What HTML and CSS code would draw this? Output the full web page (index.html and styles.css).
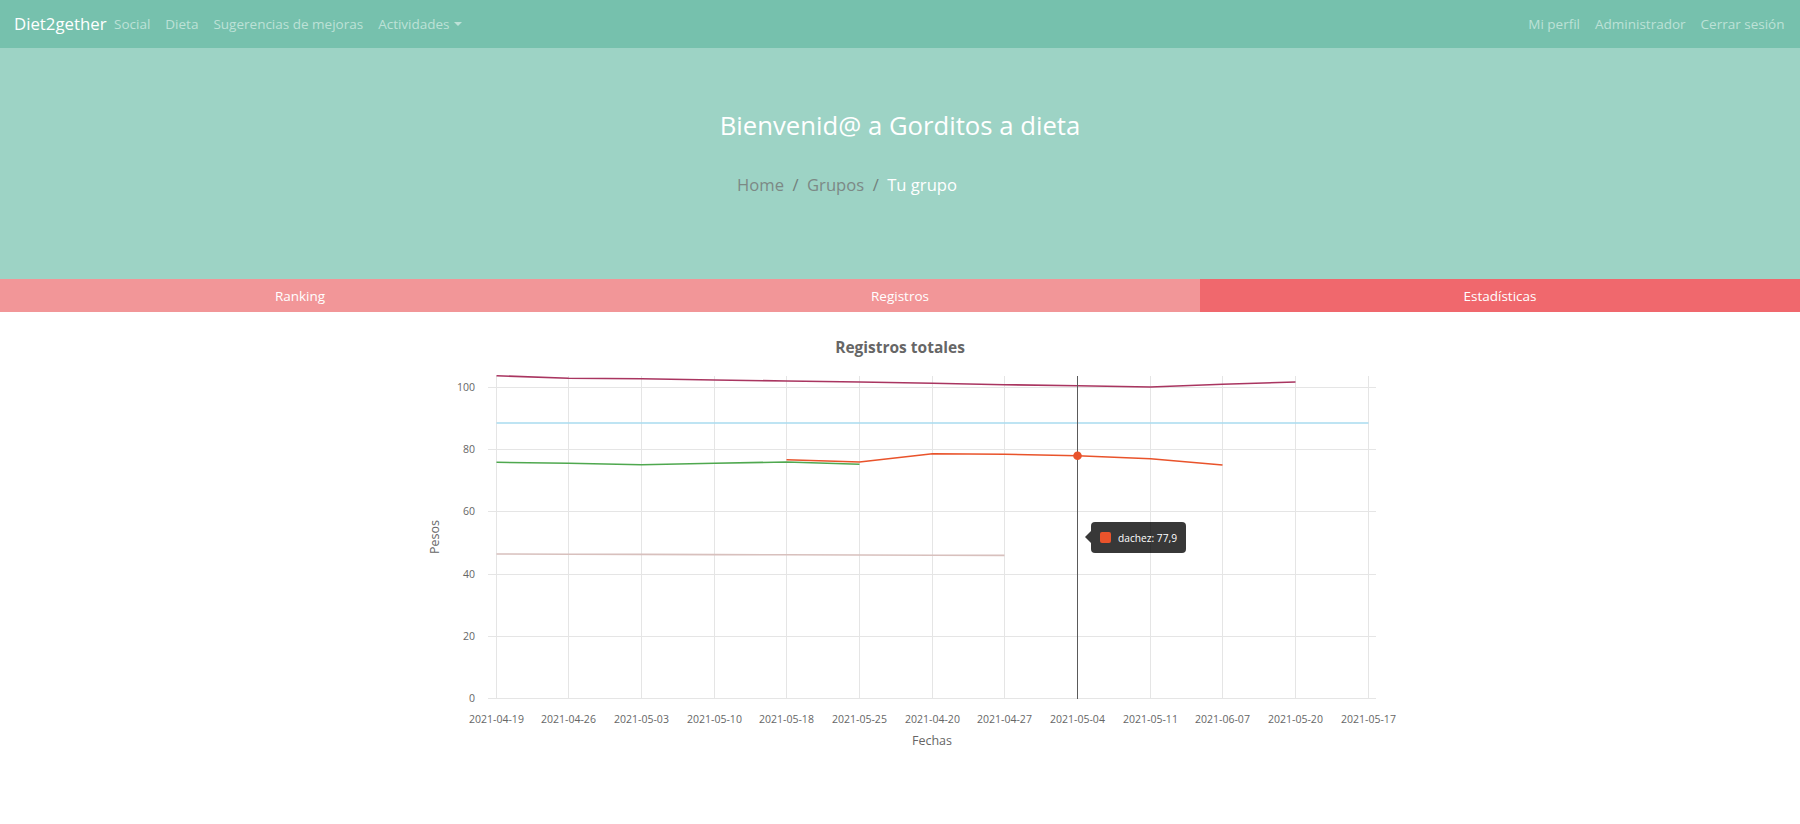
FILE: index.html
```html
<!DOCTYPE html>
<html lang="es">
<head>
<meta charset="utf-8">
<title>Diet2gether - Tu grupo</title>
<link rel="stylesheet" href="styles.css">
</head>
<body>
<nav class="navbar">
  <a class="brand" href="#">Diet2gether</a>
  <ul class="nav-list">
    <li><a class="nav-link" href="#">Social</a></li>
    <li><a class="nav-link" href="#">Dieta</a></li>
    <li><a class="nav-link" href="#">Sugerencias de mejoras</a></li>
    <li><a class="nav-link dropdown" href="#">Actividades</a></li>
  </ul>
  <ul class="nav-list nav-right">
    <li><a class="nav-link" href="#">Mi perfil</a></li>
    <li><a class="nav-link" href="#">Administrador</a></li>
    <li><a class="nav-link" href="#">Cerrar sesión</a></li>
  </ul>
</nav>

<header class="hero">
  <h1 class="hero-title">Bienvenid@ a Gorditos a dieta</h1>
  <ol class="breadcrumb">
    <li><a href="#">Home</a></li>
    <li class="sep">/</li>
    <li><a href="#">Grupos</a></li>
    <li class="sep">/</li>
    <li class="active">Tu grupo</li>
  </ol>
</header>

<div class="tabs">
  <button class="tab">Ranking</button>
  <button class="tab">Registros</button>
  <button class="tab active">Estadísticas</button>
</div>

<main class="content">
  <section class="chart-card">
    <h2 class="chart-title">Registros totales</h2>
    <div class="chart">
      <svg class="chart-svg" width="960" height="400" viewBox="0 0 960 400">
        <g class="grid">
          <line x1="68" y1="338.5" x2="956" y2="338.5"/>
          <line x1="68" y1="276.5" x2="956" y2="276.5"/>
          <line x1="68" y1="214.5" x2="956" y2="214.5"/>
          <line x1="68" y1="151.5" x2="956" y2="151.5"/>
          <line x1="68" y1="89.5" x2="956" y2="89.5"/>
          <line x1="68" y1="27.5" x2="956" y2="27.5"/>
          <line x1="76.5" y1="16" x2="76.5" y2="339"/>
          <line x1="148.5" y1="16" x2="148.5" y2="339"/>
          <line x1="221.5" y1="16" x2="221.5" y2="339"/>
          <line x1="294.5" y1="16" x2="294.5" y2="339"/>
          <line x1="366.5" y1="16" x2="366.5" y2="339"/>
          <line x1="439.5" y1="16" x2="439.5" y2="339"/>
          <line x1="512.5" y1="16" x2="512.5" y2="339"/>
          <line x1="584.5" y1="16" x2="584.5" y2="339"/>
          <line x1="657.5" y1="16" x2="657.5" y2="339"/>
          <line x1="730.5" y1="16" x2="730.5" y2="339"/>
          <line x1="802.5" y1="16" x2="802.5" y2="339"/>
          <line x1="875.5" y1="16" x2="875.5" y2="339"/>
          <line x1="948.5" y1="16" x2="948.5" y2="339"/>
        </g>
        <g class="ticks-y" text-anchor="end">
          <text x="55" y="342">0</text>
          <text x="55" y="280">20</text>
          <text x="55" y="218">40</text>
          <text x="55" y="155">60</text>
          <text x="55" y="93">80</text>
          <text x="55" y="31">100</text>
        </g>
        <g class="ticks-x" text-anchor="middle">
          <text x="76.5" y="363">2021-04-19</text>
          <text x="148.5" y="363">2021-04-26</text>
          <text x="221.5" y="363">2021-05-03</text>
          <text x="294.5" y="363">2021-05-10</text>
          <text x="366.5" y="363">2021-05-18</text>
          <text x="439.5" y="363">2021-05-25</text>
          <text x="512.5" y="363">2021-04-20</text>
          <text x="584.5" y="363">2021-04-27</text>
          <text x="657.5" y="363">2021-05-04</text>
          <text x="730.5" y="363">2021-05-11</text>
          <text x="802.5" y="363">2021-06-07</text>
          <text x="875.5" y="363">2021-05-20</text>
          <text x="948.5" y="363">2021-05-17</text>
        </g>
        <text class="axis-label" x="512" y="385" text-anchor="middle">Fechas</text>
        <text class="axis-label" transform="translate(19 177) rotate(-90)" text-anchor="middle">Pesos</text>
        <g class="series" fill="none">
          <polyline stroke="#d8c0bd" points="76.5,194 148.5,194.2 221.5,194.4 294.5,194.6 366.5,194.8 439.5,195 512.5,195.2 584.5,195.4"/>
          <polyline stroke="#a9dbef" points="76.5,63 948.5,63"/>
          <polyline stroke="#4fa84f" points="76.5,102.3 148.5,103.3 221.5,104.7 294.5,103.3 366.5,102 439.5,104.3"/>
          <polyline stroke="#e9532b" points="366.5,99.7 439.5,102 512.5,93.7 584.5,94.3 657.5,95.7 730.5,98.7 802.5,105"/>
          <polyline stroke="#a93560" points="76.5,15.7 148.5,18.3 221.5,18.7 294.5,20 366.5,21 439.5,22 512.5,23.3 584.5,24.7 657.5,25.7 730.5,27 802.5,24.3 875.5,22"/>
        </g>
        <line class="hover-line" x1="657.5" y1="16" x2="657.5" y2="339"/>
        <circle cx="657.5" cy="95.7" r="4.3" fill="#e9532b"/>
      </svg>
      <div class="tooltip">
        <span class="tooltip-swatch"></span>
        <span class="tooltip-text">dachez: 77,9</span>
      </div>
    </div>
  </section>
</main>
</body>
</html>
```

FILE: styles.css
```css
* { box-sizing: border-box; }
html, body { margin: 0; padding: 0; }
body {
  font-family: "Open Sans", "Noto Sans", sans-serif;
  background: #fff;
  color: #212529;
  overflow: hidden;
}
a { text-decoration: none; }

.navbar {
  display: flex;
  align-items: center;
  height: 48px;
  padding: 0 8px 0 14px;
  background: #76c1ad;
}
.brand {
  color: #fff;
  font-size: 16.8px;
  line-height: 1;
}
.nav-list {
  display: flex;
  list-style: none;
  margin: 0;
  padding: 0;
}
.nav-right { margin-left: auto; }
.nav-link {
  display: block;
  padding: 0 7.5px;
  font-size: 13.5px;
  color: #bde1d7;
}
.dropdown::after {
  content: "";
  display: inline-block;
  margin-left: 4px;
  vertical-align: 3px;
  border-top: 4px solid #bde1d7;
  border-left: 4px solid transparent;
  border-right: 4px solid transparent;
}

.hero {
  height: 231px;
  background: #9dd3c5;
  display: flex;
  flex-direction: column;
  align-items: center;
  padding-top: 62px;
}
.hero-title {
  margin: 0;
  font-size: 25.7px;
  font-weight: 400;
  line-height: 32px;
  color: #fff;
}
.breadcrumb {
  display: flex;
  list-style: none;
  margin: 31px 106px 0 0;
  padding: 0;
  font-size: 16.6px;
  line-height: 24px;
  gap: 8.5px;
}
.breadcrumb a { color: #7c8985; }
.breadcrumb .sep { color: #72807c; }
.breadcrumb .active { color: #fff; }

.tabs {
  display: grid;
  grid-template-columns: repeat(3, 1fr);
  height: 33px;
}
.tab {
  border: 0;
  margin: 0;
  padding: 0;
  background: #f29698;
  color: #fff;
  font-family: inherit;
  font-size: 13.5px;
}
.tab.active { background: #f0686d; }

.content { padding-top: 25px; }
.chart-title {
  margin: 0;
  text-align: center;
  font-size: 15.5px;
  line-height: 20px;
  font-weight: 700;
  color: #666;
}
.chart {
  position: relative;
  width: 960px;
  margin: 3px auto 0;
}
.chart-svg { display: block; overflow: visible; }
.grid line { stroke: #e5e5e5; stroke-width: 1; }
.ticks-y text, .ticks-x text {
  font-family: "Open Sans", sans-serif;
  font-size: 10.5px;
  fill: #666;
}
.axis-label {
  font-family: "Open Sans", sans-serif;
  font-size: 12.5px;
  fill: #666;
}
.series polyline { stroke-width: 1.6; stroke-linejoin: round; }
.hover-line { stroke: #5a5a5a; stroke-width: 1; }

.tooltip {
  position: absolute;
  left: 671px;
  top: 162px;
  width: 95px;
  height: 31px;
  display: flex;
  align-items: center;
  padding-left: 9px;
  gap: 7px;
  background: rgba(0, 0, 0, 0.78);
  border-radius: 4px;
}
.tooltip::before {
  content: "";
  position: absolute;
  left: -6px;
  top: 9px;
  border-right: 6px solid rgba(0, 0, 0, 0.78);
  border-top: 6px solid transparent;
  border-bottom: 6px solid transparent;
}
.tooltip-swatch {
  width: 11px;
  height: 11px;
  border-radius: 2px;
  background: #e9532b;
}
.tooltip-text {
  color: #fff;
  font-size: 10.2px;
  white-space: nowrap;
}
```
